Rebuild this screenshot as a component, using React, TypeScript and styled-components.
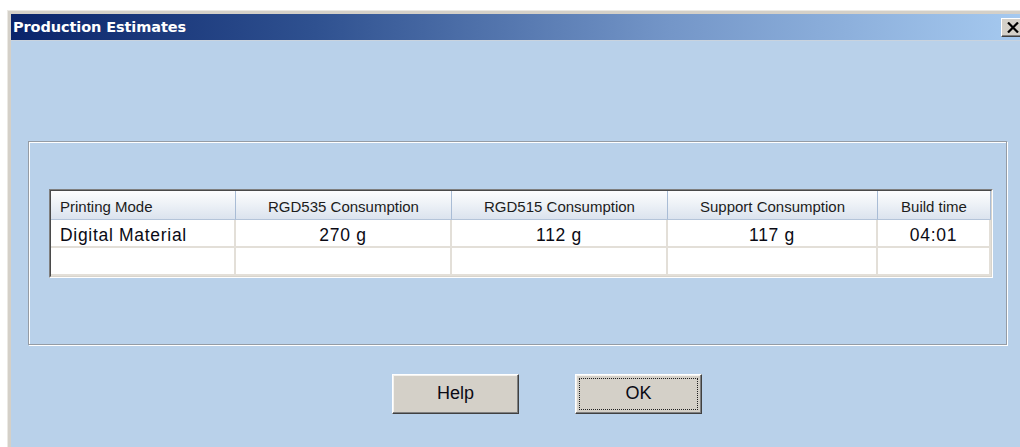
import React from "react";
import styled, { createGlobalStyle } from "styled-components";

const GlobalStyle = createGlobalStyle`
  html, body {
    margin: 0;
    padding: 0;
    background: #ffffff;
    overflow: hidden;
  }
  body {
    font-family: "Liberation Sans", Arial, sans-serif;
  }
`;

const Window = styled.div`
  margin: 10px 0 0 7px;
  width: 1018px;
  height: 440px;
  border-top: 1px solid #ebe9e4;
  border-left: 1px solid #ebe9e4;
  background: #d4d0c8;
  padding: 3px 0 0 3px;
  box-sizing: border-box;
  display: flex;
  flex-direction: column;
`;

const TitleBar = styled.div`
  height: 26px;
  flex: none;
  display: flex;
  align-items: center;
  justify-content: space-between;
  padding-left: 2px;
  background: linear-gradient(90deg, #0a246a 0%, #2f5190 30%, #7496c8 65%, #a6caf0 100%);
  border-bottom: 1px solid #c9d3de;
`;

const Title = styled.span`
  font-family: "DejaVu Sans", Verdana, sans-serif;
  font-weight: bold;
  font-size: 14.5px;
  color: #ffffff;
  letter-spacing: -0.1px;
`;

const CloseButton = styled.div`
  width: 21px;
  height: 19px;
  margin-right: 3px;
  box-sizing: border-box;
  background: #d4d0c8;
  border: 1px solid;
  border-color: #ffffff #404040 #404040 #ffffff;
  box-shadow: inset -1px -1px 0 #808080;
  display: flex;
  align-items: center;
  justify-content: center;
  padding-left: 2px;
`;

const Content = styled.div`
  flex: 1;
  background: #b9d1ea;
  padding: 100px 0 0 17px;
  display: flex;
  flex-direction: column;
`;

const GroupBox = styled.div`
  width: 979px;
  height: 204px;
  box-sizing: border-box;
  border: 1px solid #959ca5;
  box-shadow: 1px 1px 0 #ffffff, inset 1px 1px 0 #ffffff;
  padding: 47px 0 0 20px;
`;

const TableFrame = styled.div`
  width: 944px;
  height: 89px;
  box-sizing: border-box;
  border: 1px solid;
  border-color: #7f7f7f #ffffff #ffffff #7f7f7f;
`;

const TableInner = styled.div`
  height: 100%;
  box-sizing: border-box;
  border: 1px solid;
  border-color: #4a4a4a #d8d4cc #d8d4cc #4a4a4a;
  background: #ffffff;
  display: grid;
  grid-template-columns: 185px 216px 216px 210px 113px;
  grid-template-rows: 29px 28px 28px;
`;

const HeadCell = styled.div<{ $left?: boolean }>`
  box-sizing: border-box;
  display: flex;
  align-items: center;
  justify-content: ${(p) => (p.$left ? "flex-start" : "center")};
  padding-left: ${(p) => (p.$left ? "9px" : "0")};
  padding-top: 2px;
  background: linear-gradient(180deg, #fdfdfe 0%, #eef2f7 45%, #dbe3ee 100%);
  border-right: 1px solid #a9bcd5;
  border-bottom: 1px solid #b4c4d9;
  font-size: 15px;
  color: #1c1c1c;
  white-space: nowrap;
`;

const BodyCell = styled.div<{ $left?: boolean }>`
  box-sizing: border-box;
  display: flex;
  align-items: center;
  justify-content: ${(p) => (p.$left ? "flex-start" : "center")};
  padding-left: ${(p) => (p.$left ? "9px" : "0")};
  padding-top: 5px;
  border-right: 2px solid #e3dfd8;
  border-bottom: 2px solid #e3dfd8;
  font-size: 17.5px;
  letter-spacing: 0.7px;
  color: #0a0a14;
  white-space: nowrap;
`;

const ButtonRow = styled.div`
  display: flex;
  gap: 56px;
  margin-top: 29px;
  padding-left: 364px;
`;

const DialogButton = styled.button<{ $default?: boolean }>`
  width: 127px;
  height: 40px;
  box-sizing: border-box;
  background: #d4d0c8;
  border: 1px solid;
  border-color: #ffffff #404040 #404040 #ffffff;
  box-shadow: inset -1px -1px 0 #808080, inset 1px 1px 0 #f4f2ee;
  font-family: "Liberation Sans", Arial, sans-serif;
  font-size: 18px;
  color: #0a0a14;
  padding: 0 0 2px 0;
  outline: ${(p) => (p.$default ? "1px dotted #202020" : "none")};
  outline-offset: -5px;
  cursor: default;
`;

const columns = [
  "Printing Mode",
  "RGD535 Consumption",
  "RGD515 Consumption",
  "Support Consumption",
  "Build time",
];

const rows: string[][] = [
  ["Digital Material", "270 g", "112 g", "117 g", "04:01"],
  ["", "", "", "", ""],
];

export default function App() {
  return (
    <>
      <GlobalStyle />
      <Window>
        <TitleBar>
          <Title>Production Estimates</Title>
          <CloseButton>
            <svg width="12" height="11" viewBox="0 0 12 11">
              <path d="M1 0.5 L11 10.5 M11 0.5 L1 10.5" stroke="#000" strokeWidth="2.2" />
            </svg>
          </CloseButton>
        </TitleBar>
        <Content>
          <GroupBox>
            <TableFrame>
              <TableInner>
                {columns.map((c, i) => (
                  <HeadCell key={c} $left={i === 0}>
                    {c}
                  </HeadCell>
                ))}
                {rows.map((r, ri) =>
                  r.map((v, ci) => (
                    <BodyCell key={`${ri}-${ci}`} $left={ci === 0}>
                      {v}
                    </BodyCell>
                  ))
                )}
              </TableInner>
            </TableFrame>
          </GroupBox>
          <ButtonRow>
            <DialogButton>Help</DialogButton>
            <DialogButton $default>OK</DialogButton>
          </ButtonRow>
        </Content>
      </Window>
    </>
  );
}
